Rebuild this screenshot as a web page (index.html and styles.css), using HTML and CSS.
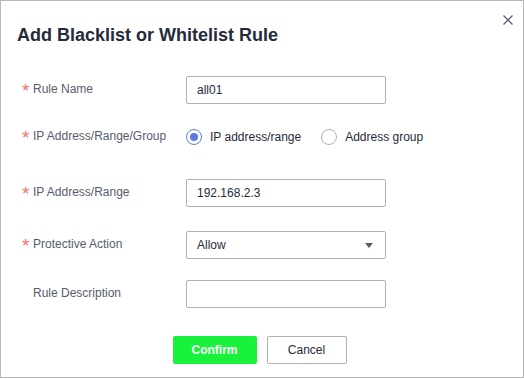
FILE: index.html
```html
<!DOCTYPE HTML>
<html>
	<head>
		<meta name="viewport" content="width=device-width, initial-scale=1">
		<link rel="stylesheet" href="styles.css">
	</head>
	<body>
		<div class="dialog">
			<div class="dialog-header">
				<h1 class="dialog-title">Add Blacklist or Whitelist Rule</h1>
				<svg class="close-icon" width="10" height="10" viewBox="0 0 10 10">
					<path d="M0.5 0.5 L9.5 9.5 M9.5 0.5 L0.5 9.5" stroke="#5e6370" stroke-width="1.3" fill="none"/>
				</svg>
			</div>
			<div class="form">
				<div class="form-row row-name">
					<div class="form-label"><span class="required">*</span>Rule Name</div>
					<div class="form-input">all01</div>
				</div>
				<div class="form-row row-type">
					<div class="form-label"><span class="required">*</span>IP Address/Range/Group</div>
					<div class="radio-group">
						<div class="radio checked"><span class="radio-dot"></span>IP address/range</div>
						<div class="radio"><span class="radio-dot"></span>Address group</div>
					</div>
				</div>
				<div class="form-row row-ip">
					<div class="form-label"><span class="required">*</span>IP Address/Range</div>
					<div class="form-input">192.168.2.3</div>
				</div>
				<div class="form-row row-action">
					<div class="form-label"><span class="required">*</span>Protective Action</div>
					<div class="form-input select">Allow<span class="select-arrow"></span></div>
				</div>
				<div class="form-row row-desc">
					<div class="form-label"><span class="required blank"></span>Rule Description</div>
					<div class="form-input"></div>
				</div>
			</div>
			<div class="dialog-footer">
				<div class="btn btn-confirm">Confirm</div>
				<div class="btn btn-cancel">Cancel</div>
			</div>
		</div>
	</body>
</html>
```

FILE: styles.css
```css
html, body{
	margin: 0;
	padding: 0;
	font-family: 'Liberation Sans', Arial, sans-serif;
	background: #ffffff;
}
.dialog{
	width: 522px;
	height: 376px;
	border: 1px solid #b8b8b8;
	background: #ffffff;
	display: flex;
	flex-direction: column;
}
.dialog-header{
	display: flex;
	justify-content: space-between;
	align-items: flex-start;
	padding: 13px 10px 0 16px;
}
.dialog-title{
	margin: 0;
	padding-top: 10px;
	font-size: 18px;
	font-weight: 700;
	color: #252b3a;
	line-height: 22px;
}
.close-icon{
	margin-top: 1px;
}
.form{
	display: flex;
	flex-direction: column;
	margin-top: 30px;
}
.form-row{
	display: flex;
	align-items: center;
	height: 28px;
}
.row-type{ margin-top: 19px; }
.row-ip{ margin-top: 28px; }
.row-action{ margin-top: 24px; }
.row-desc{ margin-top: 21px; }
.form-label{
	width: 165px;
	padding-left: 20px;
	font-size: 12px;
	color: #575d6c;
	display: flex;
	align-items: center;
	margin-top: -3px;
}
.required{
	color: #f66f6a;
	font-size: 19px;
	width: 12px;
	line-height: 12px;
	padding-top: 5px;
	margin-left: 1px;
	margin-right: -1px;
}
.form-input{
	box-sizing: border-box;
	width: 200px;
	height: 28px;
	border: 1px solid #adb0b8;
	border-radius: 2px;
	padding: 0 10px;
	font-size: 12px;
	color: #252b3a;
	display: flex;
	align-items: center;
}
.select{
	justify-content: space-between;
}
.select-arrow{
	width: 0;
	height: 0;
	border-left: 4px solid transparent;
	border-right: 4px solid transparent;
	border-top: 5px solid #575d6c;
	margin-right: 2px;
}
.radio-group{
	display: flex;
	align-items: center;
}
.radio{
	display: flex;
	align-items: center;
	font-size: 12px;
	color: #252b3a;
	margin-right: 20px;
}
.radio-dot{
	box-sizing: border-box;
	width: 16px;
	height: 16px;
	border-radius: 50%;
	border: 1px solid #adb0b8;
	margin-right: 8px;
	position: relative;
}
.radio.checked .radio-dot{
	border-color: #5e7ce0;
}
.radio.checked .radio-dot::after{
	content: "";
	position: absolute;
	left: 3px;
	top: 3px;
	width: 8px;
	height: 8px;
	border-radius: 50%;
	background: #5e7ce0;
}
.dialog-footer{
	display: flex;
	justify-content: center;
	margin-top: 28px;
	padding-right: 5px;
}
.btn{
	box-sizing: border-box;
	height: 28px;
	border-radius: 2px;
	font-size: 12px;
	display: flex;
	align-items: center;
	justify-content: center;
}
.btn-confirm{
	width: 84px;
	background: #18f23a;
	color: #ffffff;
	font-weight: 700;
	margin-right: 10px;
}
.btn-cancel{
	width: 80px;
	border: 1px solid #adb0b8;
	color: #252b3a;
}
```
